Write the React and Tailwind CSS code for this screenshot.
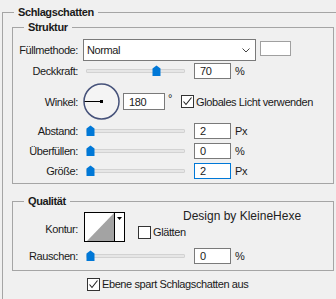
import React from "react";

const Thumb = ({ left }) => (
  <svg
    className="absolute top-[2px]"
    style={{ left }}
    width="9"
    height="11"
    viewBox="0 0 9 11"
  >
    <path d="M4.5 0.5 L8.5 3.5 L8.5 11 L0.5 11 L0.5 3.5 Z" fill="#0078d7" />
  </svg>
);

const Slider = ({ value }) => (
  <div className="relative ml-[8px] flex h-[16px] w-[99px] shrink-0 items-center">
    <div className="h-[4px] w-full rounded-[1px] border border-[#d2d2d2] bg-[#e6e6e6]" />
    <Thumb left={value} />
  </div>
);

const Input = ({ value, focused, className = "" }) => (
  <div
    className={`flex shrink-0 items-center border bg-white pl-[5px] text-[#1a1a1a] ${
      focused ? "border-[#0078d7]" : "border-[#7a7a7a]"
    } ${className}`}
  >
    {value}
  </div>
);

const Check = ({ checked }) => (
  <div className="flex h-[13px] w-[13px] shrink-0 items-center justify-center border border-[#333] bg-white">
    {checked && (
      <svg width="11" height="11" viewBox="0 0 11 11">
        <polyline
          points="1.5,5.5 4,8.5 9.5,1.5"
          fill="none"
          stroke="#222"
          strokeWidth="1.1"
        />
      </svg>
    )}
  </div>
);

const Label = ({ children }) => (
  <div className="w-[65px] shrink-0 text-right">{children}</div>
);

const SliderRow = ({ label, thumb, value, unit, focused, className = "" }) => (
  <div className={`flex h-[16px] items-center ${className}`}>
    <Label>{label}</Label>
    <Slider value={thumb} />
    <Input value={value} focused={focused} className="ml-[9px] h-[16px] w-[37px]" />
    <span className="ml-[4px]">{unit}</span>
  </div>
);

export default function App() {
  return (
    <div className="h-[299px] w-[336px] overflow-hidden bg-[#f0f0f0] pl-[2px] pt-[5px] font-['Liberation_Sans',Arial,sans-serif] text-[11px] leading-[14px] tracking-[-0.4px] text-[#1a1a1a]">
      <fieldset className="w-[360px] border border-[#a5a5a5] pb-[20px]">
        <legend className="ml-[11px] px-[4px] font-bold leading-[14px]">
          Schlagschatten
        </legend>

        <div className="pl-[9px]">
          {/* Struktur */}
          <fieldset className="mt-[1px] w-[322px] border border-[#a5a5a5]">
            <legend className="ml-[11px] px-[4px] font-bold leading-[14px]">
              Struktur
            </legend>
            <div className="flex flex-col pt-[5px] pb-[4px]">
              <div className="flex h-[22px] items-start">
                <div className="w-[65px] shrink-0 self-center text-right">
                  Füllmethode:
                </div>
                <div className="ml-[5px] flex h-[22px] w-[173px] shrink-0 items-center justify-between border border-[#7a7a7a] bg-white pl-[3px] pr-[5px]">
                  <span>Normal</span>
                  <svg width="8" height="5" viewBox="0 0 8 5">
                    <polyline
                      points="0.5,0.5 4,4 7.5,0.5"
                      fill="none"
                      stroke="#444"
                      strokeWidth="1"
                    />
                  </svg>
                </div>
                <div className="ml-[4px] mt-[2px] h-[15px] w-[31px] border border-[#a0a0a0] bg-white" />
              </div>

              <SliderRow
                className="mt-[2px]"
                label="Deckkraft:"
                thumb={66}
                value="70"
                unit="%"
              />

              <div className="mt-[4px] flex h-[37px] items-center">
                <Label>Winkel:</Label>
                <svg className="ml-[5px] shrink-0" width="37" height="37" viewBox="0 0 37 37">
                  <circle
                    cx="18.5"
                    cy="18.5"
                    r="17.5"
                    fill="#f4f4f4"
                    stroke="#46527a"
                    strokeWidth="1.5"
                  />
                  <line x1="1.5" y1="18.5" x2="18.5" y2="18.5" stroke="#000" strokeWidth="1" />
                  <rect x="17" y="17" width="3" height="3" fill="#000" />
                </svg>
                <Input value="180" className="ml-[3px] h-[17px] w-[42px]" />
                <span className="w-[16px] shrink-0 self-start pl-[3px] pt-[8px]">°</span>
                <Check checked />
                <span className="ml-[2px]">Globales Licht verwenden</span>
              </div>

              <SliderRow className="mt-[3px]" label="Abstand:" thumb={0} value="2" unit="Px" />
              <SliderRow className="mt-[4px]" label="Überfüllen:" thumb={0} value="0" unit="%" />
              <SliderRow
                className="mt-[4px]"
                label="Größe:"
                thumb={0}
                value="2"
                unit="Px"
                focused
              />
            </div>
          </fieldset>

          {/* Qualität */}
          <fieldset className="relative mt-[10px] w-[322px] border border-[#a5a5a5]">
            <legend className="ml-[11px] px-[4px] font-bold leading-[14px]">
              Qualität
            </legend>
            <div className="flex flex-col pt-[4px] pb-[6px]">
              <div className="flex h-[30px] items-start">
                <div className="w-[65px] shrink-0 self-center pt-[3px] text-right">
                  Kontur:
                </div>
                <div className="ml-[6px] flex h-[30px] w-[41px] shrink-0 border border-black bg-white">
                  <svg width="29" height="28" viewBox="0 0 29 28">
                    <polygon points="2,28 29,0 29,28" fill="#a3a3a3" />
                  </svg>
                  <div className="flex flex-1 justify-center border-l border-black pt-[4px]">
                    <svg width="5" height="3" viewBox="0 0 5 3">
                      <polygon points="0,0 5,0 2.5,3" fill="#000" />
                    </svg>
                  </div>
                </div>
                <div className="ml-[13px] mt-[14px]">
                  <Check />
                </div>
                <span className="ml-[2px] mt-[13px]">Glätten</span>
              </div>

              <SliderRow className="mt-[6px]" label="Rauschen:" thumb={0} value="0" unit="%" />
            </div>

            {/* watermark */}
            <span className="absolute left-[170px] top-[1px] text-[12px] tracking-normal text-[#222]">
              Design by KleineHexe
            </span>
          </fieldset>

          <div className="mt-[6px] flex items-center pl-[75px]">
            <Check checked />
            <span className="ml-[2px]">Ebene spart Schlagschatten aus</span>
          </div>
        </div>
      </fieldset>
    </div>
  );
}
